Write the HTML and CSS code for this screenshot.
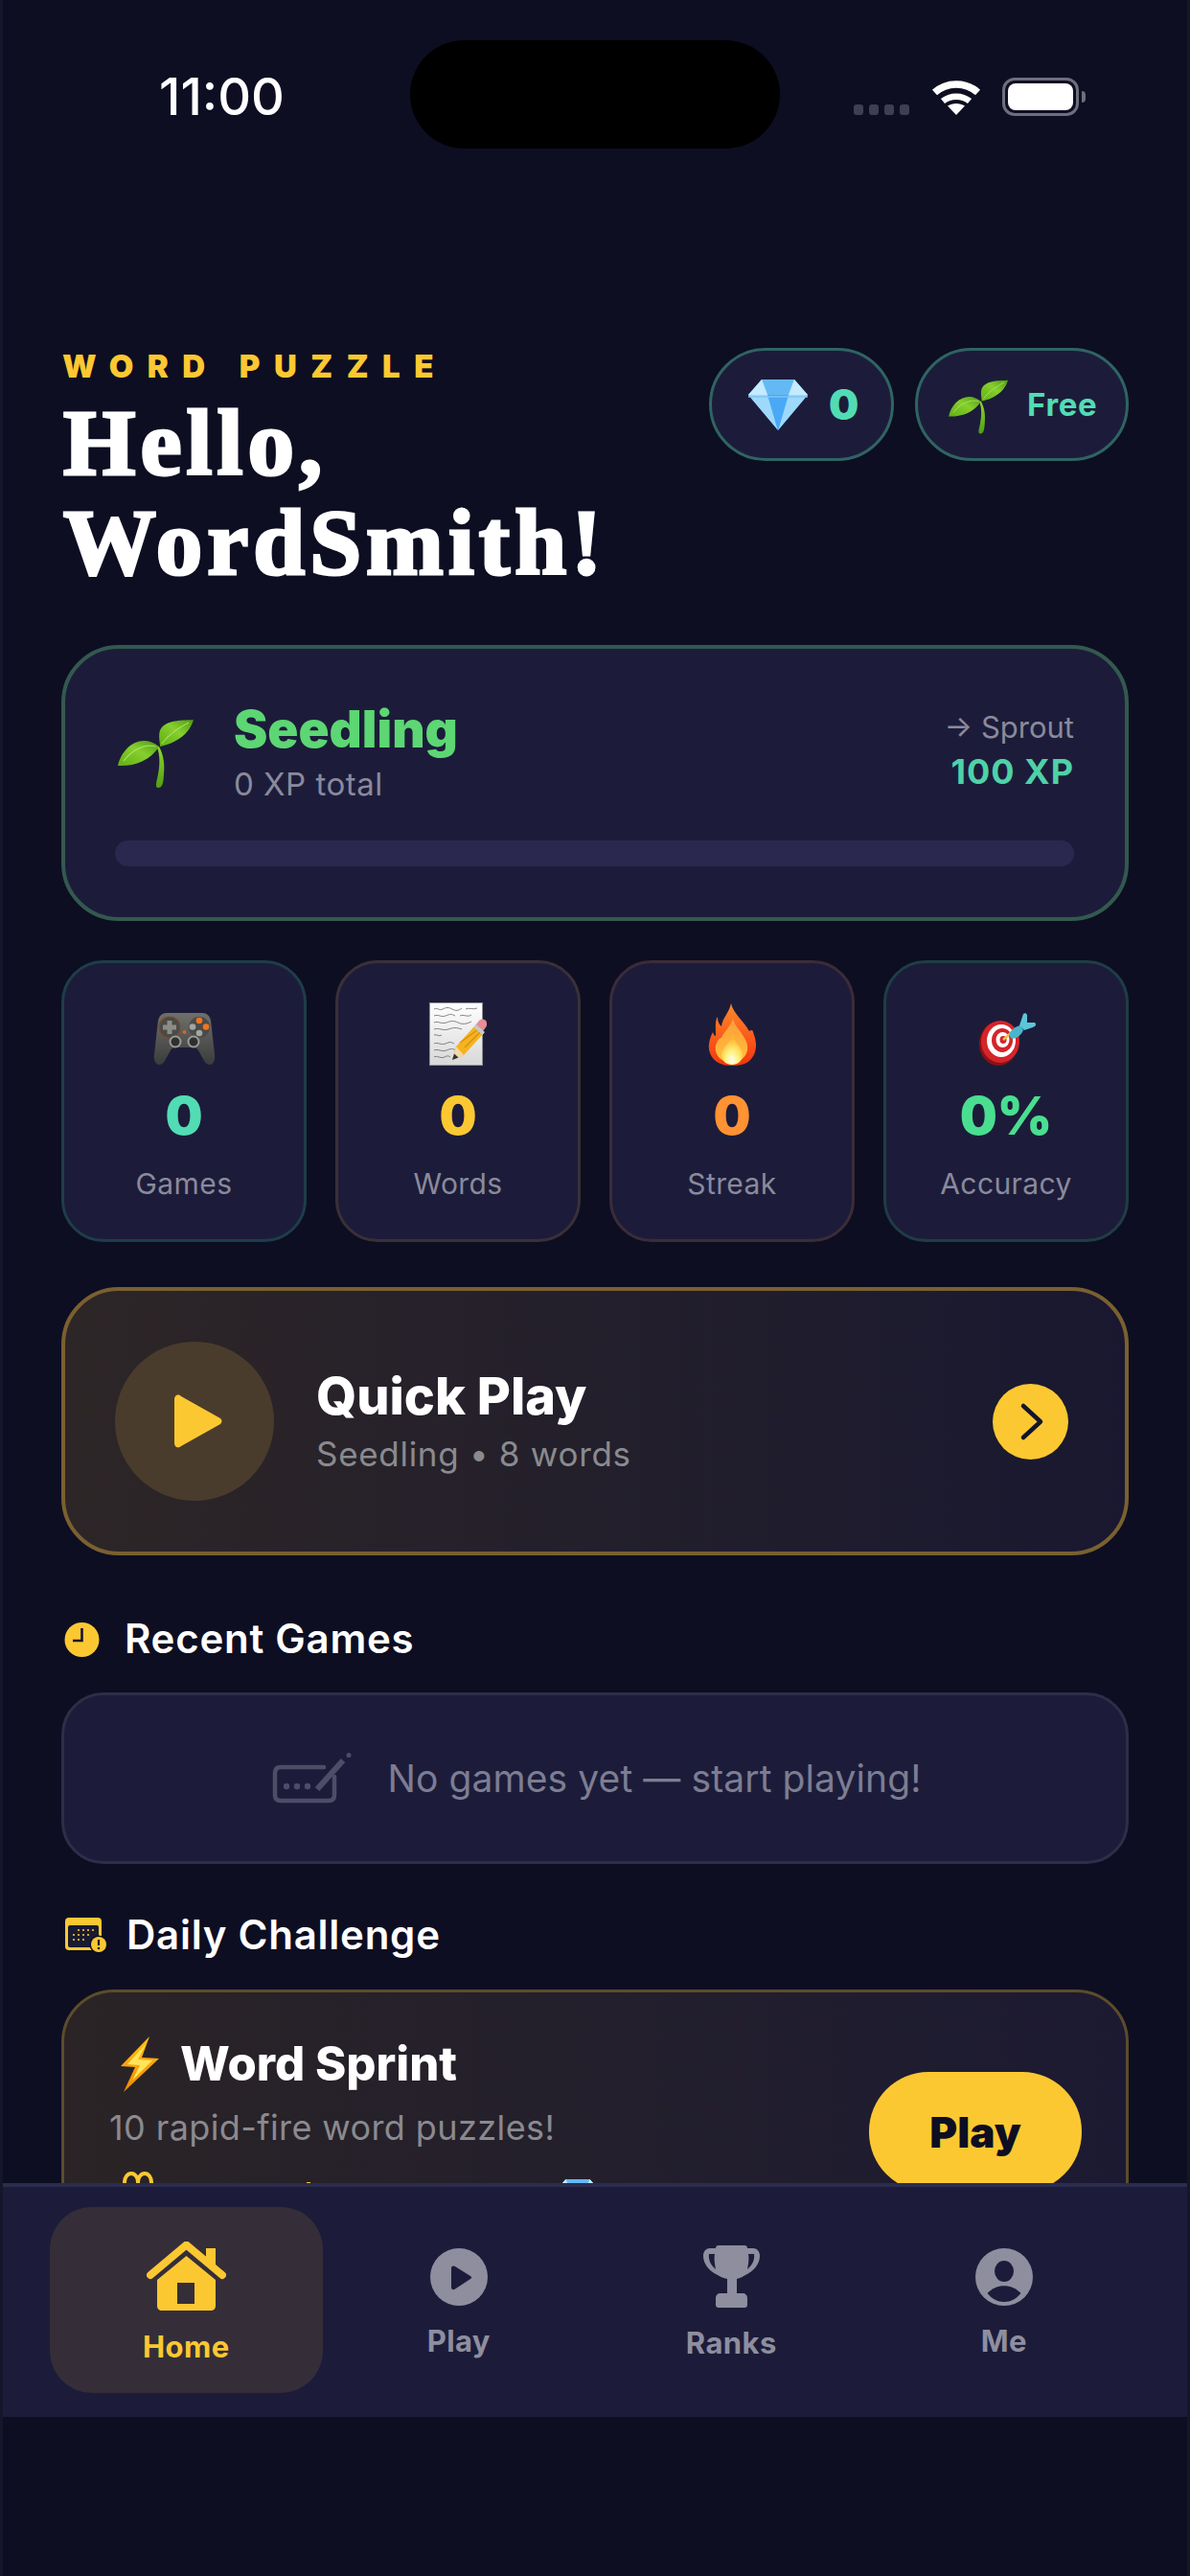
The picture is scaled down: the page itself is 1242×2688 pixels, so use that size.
FILE: index.html
```html
<!DOCTYPE html>
<html lang="en">
<head>
<meta charset="utf-8">
<title>Word Puzzle</title>
<link rel="stylesheet" href="styles.css">
</head>
<body>
<svg class="defs" width="0" height="0" aria-hidden="true">
  <defs>
    <linearGradient id="leaf" x1="0" y1="1" x2="1" y2="0"><stop offset="0" stop-color="#5fae12"/><stop offset=".55" stop-color="#86cf2e"/><stop offset="1" stop-color="#4f9a14"/></linearGradient>
    <linearGradient id="stem" x1="0" y1="0" x2="0" y2="1"><stop offset="0" stop-color="#8fd62e"/><stop offset="1" stop-color="#4f9f12"/></linearGradient>
    <linearGradient id="gem" x1="0" y1="0" x2="0" y2="1"><stop offset="0" stop-color="#a9e2ff"/><stop offset="1" stop-color="#3f9df0"/></linearGradient>
    <linearGradient id="pad" x1="0" y1="0" x2="0" y2="1"><stop offset="0" stop-color="#6f706b"/><stop offset="1" stop-color="#3b3b3c"/></linearGradient>
    <linearGradient id="paper" x1="0" y1="0" x2="0" y2="1"><stop offset="0" stop-color="#fff"/><stop offset="1" stop-color="#d8d8d8"/></linearGradient>
    <linearGradient id="flame" x1="0" y1="0" x2="0" y2="1"><stop offset="0" stop-color="#ff8a2a"/><stop offset="1" stop-color="#f2350f"/></linearGradient>
    <linearGradient id="flame2" x1="0" y1="0" x2="0" y2="1"><stop offset="0" stop-color="#ff9a3a"/><stop offset="1" stop-color="#ffc23a"/></linearGradient>
    <radialGradient id="flame3" cx=".5" cy=".85" r=".7"><stop offset="0" stop-color="#fffef0"/><stop offset=".45" stop-color="#fff07a"/><stop offset="1" stop-color="#ffb52e"/></radialGradient>
    <linearGradient id="bolt" x1="0" y1="0" x2="0" y2="1"><stop offset="0" stop-color="#ffc21a"/><stop offset="1" stop-color="#f08a00"/></linearGradient>
    <symbol id="sprout" viewBox="0 0 80 74">
      <path d="M0 49C4 30 24 14 43 29C34 44 16 50 0 49Z" fill="url(#leaf)"/>
      <path d="M79 1C70 2 50 0 44 12C42 18 44 24 44 29C58 26 74 18 79 1Z" fill="url(#leaf)"/>
      <path d="M6 44C16 32 28 26 40 29M74 4C62 10 52 18 46 26" stroke="#b5e66a" stroke-width="1.2" fill="none" opacity=".8"/>
      <path d="M43 29C48 38 49 48 48 58C47.500 66 47 72 42 72C38 72 41 64 42 58C44 48 44 38 41 30Z" fill="url(#stem)"/>
    </symbol>
    <symbol id="diamond" viewBox="0 0 62 53">
      <path d="M14 0H48L62 16L31 53L0 16Z" fill="url(#gem)"/>
      <path d="M14 0L20 16H42L48 0Z" fill="#64b9f5"/>
      <path d="M0 16H20L31 53ZM62 16H42L31 53Z" fill="#9ed9fb"/>
      <path d="M20 16H42L31 53Z" fill="#4aa9f7"/>
      <path d="M14 0L0 16H20ZM48 0L62 16H42Z" fill="#c4ebff"/>
      <path d="M0 18H62" stroke="#7fc4f5" stroke-width="1.500"/>
    </symbol>
  </defs>
</svg>
<div class="screen">
  <main class="content">
    <header class="status">
      <span class="time">11:00</span>
      <div class="island"></div>
      <div class="status-icons">
        <div class="signal"><i></i><i></i><i></i><i></i></div>
        <svg class="wifi" viewBox="0 0 52 38"><path d="M3.500 14.500C16 3 36 3 48.500 14.500" fill="none" stroke="#fff" stroke-width="7.500"/><path d="M12 23.500C20 17 32 17 40 23.500" fill="none" stroke="#fff" stroke-width="6.500"/><path d="M26 38L17 28.500C22 25 30 25 35 28.500Z" fill="#fff"/></svg>
        <div class="battery"><div class="battery-fill"></div></div>
      </div>
    </header>

    <section class="hero">
      <div class="hero-text">
        <div class="eyebrow">WORD PUZZLE</div>
        <h1 class="greeting">Hello,<br>WordSmith!</h1>
      </div>
      <div class="pills">
        <div class="pill pill-gems"><svg class="pill-gem"><use href="#diamond"/></svg><span class="pill-count">0</span></div>
        <div class="pill pill-plan"><svg class="pill-sprout"><use href="#sprout"/></svg><span class="pill-label">Free</span></div>
      </div>
    </section>

    <section class="xp-card">
      <div class="xp-row">
        <svg class="xp-sprout"><use href="#sprout"/></svg>
        <div class="xp-text">
          <div class="xp-level">Seedling</div>
          <div class="xp-total">0 XP total</div>
        </div>
        <div class="xp-next">
          <div class="xp-next-name">→ Sprout</div>
          <div class="xp-next-value">100 XP</div>
        </div>
      </div>
      <div class="xp-bar"></div>
    </section>

    <section class="stats">
      <div class="stat stat-teal">
        <div class="stat-icon"><svg class="ic-pad" viewBox="0 0 65 57">
          <path d="M14 2H51C56 2 59 5 60 10L64 45C65 52 62 56 59 56C56 56 54 54 52 50L47 41C46 39 44 38 42 38H23C21 38 19 39 18 41L13 50C11 54 9 56 6 56C3 56 0 52 1 45L5 10C6 5 9 2 14 2Z" fill="url(#pad)"/>
          <circle cx="17" cy="17" r="11" fill="#4a4a48" stroke="#7a4a2a" stroke-width="1.200"/>
          <path d="M14.500 10H19.500V14.500H24V19.500H19.500V24H14.500V19.500H10V14.500H14.500Z" fill="#8d8d88"/>
          <circle cx="48" cy="17" r="11" fill="#4a4a48"/>
          <circle cx="48" cy="10" r="3.300" fill="#f0741e"/><circle cx="55" cy="16.500" r="3.300" fill="#f0741e"/><circle cx="41" cy="16.500" r="3.300" fill="#a5a5a0"/><circle cx="48" cy="23" r="3.300" fill="#a5a5a0"/>
          <circle cx="32.500" cy="22" r="2" fill="#d8651e"/>
          <circle cx="23" cy="32" r="5.500" fill="#2f2f2f" stroke="#9a9a96" stroke-width="2"/><circle cx="42" cy="32" r="5.500" fill="#2f2f2f" stroke="#9a9a96" stroke-width="2"/>
        </svg></div>
        <div class="stat-value v-teal">0</div>
        <div class="stat-label">Games</div>
      </div>
      <div class="stat stat-yellow">
        <div class="stat-icon"><svg class="ic-memo" viewBox="0 0 60 66">
          <rect x=".5" y=".5" width="55" height="65" fill="url(#paper)" stroke="#8f8f98"/>
          <path d="M5 7C9 5 10 9 14 7S20 5 24 7S30 9 34 6M38 7C42 5 45 8 50 6M5 14C10 12 12 16 17 14S23 12 27 14M32 14C36 12 40 16 44 13M5 21C9 19 13 23 18 21S26 19 30 21S38 23 44 20M5 28C10 26 14 30 20 28S28 26 34 28M5 34C8 33 10 36 13 34M5 43C9 41 12 45 17 43S22 41 26 43M5 50C9 48 13 52 18 50S24 48 28 50M5 57C8 55 12 59 16 57S20 56 22 57" fill="none" stroke="#555" stroke-width=".7"/>
          <path d="M28 46L48 24L57 32L36 55L24 60Z" fill="#f5b321"/>
          <path d="M32 42L52 27.500M37 47L54 30" stroke="#c98510" stroke-width="1.500" fill="none" opacity=".7"/>
          <path d="M24 60L28 46L36 55Z" fill="#f3d9a8"/><path d="M24 60L26 53.500L30.500 57.500Z" fill="#333"/>
          <path d="M48 24L52 19C54 17 57 17 59 19C60.500 21 60.500 24 59 26L56 30Z" fill="#e78d96"/>
          <path d="M46.500 26L49 23L58 31L55.500 34Z" fill="#c8c8c8"/>
        </svg></div>
        <div class="stat-value v-yellow">0</div>
        <div class="stat-label">Words</div>
      </div>
      <div class="stat stat-orange">
        <div class="stat-icon"><svg class="ic-fire" viewBox="0 0 51 65">
          <path d="M24 0C26 10 37 18 43 29C47 26 47 30 48 33C52 44 50 55 42 61C37 64 31 65 25 65C15 65 6 62 2 52C-1 44 2 36 5 30C6 33 7 34 8 34C8 26 7 18 10 14C10 20 12 22 14 24C15 15 22 10 24 0Z" fill="url(#flame)"/>
          <path d="M26 15C27 24 36 30 40 40C44 50 38 60 26 62C14 62 6 54 8 44C10 38 12 36 14 36C16 30 24 24 26 15Z" fill="url(#flame2)"/>
          <path d="M26 32C27 40 36 46 36 54C36 60 31 64 25 64C19 64 14 60 14 54C14 46 23 42 26 32Z" fill="url(#flame3)"/>
        </svg></div>
        <div class="stat-value v-orange">0</div>
        <div class="stat-label">Streak</div>
      </div>
      <div class="stat stat-green">
        <div class="stat-icon"><svg class="ic-dart" viewBox="0 0 64 56">
          <ellipse cx="24" cy="33" rx="20" ry="23" fill="#8c1111"/>
          <ellipse cx="26" cy="31" rx="20" ry="22" fill="#d5242a"/>
          <ellipse cx="27" cy="30" rx="15" ry="17" fill="#fff"/>
          <ellipse cx="28" cy="29.500" rx="11" ry="12.500" fill="#d5242a"/>
          <ellipse cx="28.500" cy="29" rx="7" ry="8" fill="#fff"/>
          <ellipse cx="29" cy="29" rx="3.500" ry="4" fill="#d5242a"/>
          <path d="M29 29L38 21" stroke="#e9c341" stroke-width="2.500"/>
          <path d="M35 24C37 18 42 15 47 14L50 19C48 24 43 28 38 28Z" fill="#4ab5cb"/>
          <path d="M46 14L50 2C52 0 55 2 54 6L54 11L62 11C64 13 63 15 60 16L51 19Z" fill="#5cc5d8"/>
        </svg></div>
        <div class="stat-value v-green">0%</div>
        <div class="stat-label">Accuracy</div>
      </div>
    </section>

    <section class="quick">
      <div class="quick-circle"><svg class="quick-play" viewBox="0 0 50 56"><path d="M0 5C0 1 4-1 7 2L48 25C50 27 50 29 48 31L7 54C4 57 0 55 0 51Z" fill="#fcc832"/></svg></div>
      <div class="quick-text">
        <div class="quick-title">Quick Play</div>
        <div class="quick-sub">Seedling • 8 words</div>
      </div>
      <div class="quick-go"><svg class="chevron" viewBox="0 0 26 41"><path d="M4 4L22 20.500L4 37" fill="none" stroke="#14142a" stroke-width="4.500" stroke-linecap="round" stroke-linejoin="round"/></svg></div>
    </section>

    <div class="section-head head-recent">
      <svg class="ic-clock" viewBox="0 0 37 36"><circle cx="18.500" cy="18" r="18" fill="#fcc832"/><path d="M18.500 6V19H9" fill="none" stroke="#14142a" stroke-width="2.600"/></svg>
      <h2 class="section-title">Recent Games</h2>
    </div>
    <section class="empty">
      <svg class="ic-empty" viewBox="0 0 83 53"><path d="M54 15H9C5 15 3 17 3 21V44C3 48 5 50 9 50H59C63 50 65 48 65 44V25" fill="none" stroke="#4d4d68" stroke-width="4.500" stroke-linecap="round"/><circle cx="15" cy="35" r="3.200" fill="#4d4d68"/><circle cx="26" cy="35" r="3.200" fill="#4d4d68"/><circle cx="37" cy="35" r="3.200" fill="#4d4d68"/><path d="M47 38L74 8" stroke="#4d4d68" stroke-width="6"/><circle cx="80" cy="2.500" r="2.500" fill="#4d4d68"/></svg>
      <p class="empty-text">No games yet — start playing!</p>
    </section>

    <div class="section-head head-daily">
      <svg class="ic-cal" viewBox="0 0 44 37"><rect width="38" height="34" rx="4" fill="#fcc832"/><rect x="3" y="8" width="32" height="23" rx="2" fill="#1a1a30"/><g fill="#fcc832"><circle cx="14" cy="13" r="1.100"/><circle cx="19" cy="13" r="1.100"/><circle cx="24" cy="13" r="1.100"/><circle cx="29" cy="13" r="1.100"/><circle cx="9" cy="18" r="1.100"/><circle cx="14" cy="18" r="1.100"/><circle cx="19" cy="18" r="1.100"/><circle cx="24" cy="18" r="1.100"/><circle cx="9" cy="23" r="1.100"/><circle cx="14" cy="23" r="1.100"/><circle cx="19" cy="23" r="1.100"/></g><circle cx="35" cy="28" r="9.500" fill="#0d0e22"/><circle cx="35" cy="28" r="8" fill="#fcc832"/><path d="M35 23V29" stroke="#1a1a30" stroke-width="2.200"/><circle cx="35" cy="32" r="1.300" fill="#1a1a30"/></svg>
      <h2 class="section-title">Daily Challenge</h2>
    </div>
    <section class="challenge">
      <div class="challenge-main">
        <div class="challenge-head">
          <svg class="ic-bolt" viewBox="0 0 40 58"><path d="M30 0L0 31L15 32L3 58L40 23L22 22Z" fill="url(#bolt)"/><path d="M26 8L7 29L20 30L12 46L33 25L18 24Z" fill="#ffe45a"/></svg>
          <h3 class="challenge-title">Word Sprint</h3>
        </div>
        <p class="challenge-desc">10 rapid-fire word puzzles!</p>
        <div class="rewards">
          <svg class="ic-ribbon" viewBox="0 0 34 34"><ellipse cx="10" cy="11" rx="7" ry="9" fill="none" stroke="#fcc832" stroke-width="4"/><ellipse cx="24" cy="11" rx="7" ry="9" fill="none" stroke="#fcc832" stroke-width="4"/><circle cx="17" cy="28" r="6" fill="#fcc832"/></svg>
          <span class="reward-tick"></span>
          <svg class="reward-gem"><use href="#diamond"/></svg>
        </div>
      </div>
      <button class="challenge-play">Play</button>
    </section>
  </main>

  <nav class="tabbar">
    <a class="tab tab-active">
      <svg class="ic-home" viewBox="0 0 83 73"><path d="M4 35L41.500 3.500L79 35" fill="none" stroke="#fcc832" stroke-width="8" stroke-linecap="round" stroke-linejoin="round"/><path d="M62 7H72V26L62 17Z" fill="#fcc832"/><path fill-rule="evenodd" d="M41.500 15L72 40V67C72 70 70 72 67 72H16C13 72 11 70 11 67V40ZM32 43V65H50V43Z" fill="#fcc832"/></svg>
      <span class="tab-label">Home</span>
    </a>
    <a class="tab">
      <svg class="ic-tab" viewBox="0 0 60 60"><circle cx="30" cy="30" r="30" fill="#8e8e9f"/><path d="M22 21C22 18.500 24 18 26 19L42 29C43.500 30 43.500 31 42 32L26 42.500C24 44 22 43 22 40.500Z" fill="#1c1c3a"/></svg>
      <span class="tab-label">Play</span>
    </a>
    <a class="tab">
      <svg class="ic-trophy" viewBox="0 0 59 65"><path fill-rule="evenodd" d="M16 0H43C45 0 46 1 46 3H52C56 3 59 6 59 11C59 19 53 27 44 31C41 33 38 34 35 35V50H41C44 50 46 52 46 55V62C46 64 45 65 43 65H16C14 65 13 64 13 62V55C13 52 15 50 18 50H25V35C21 34 18 33 15 31C6 27 0 19 0 11C0 6 3 3 7 3H13C13 1 14 0 16 0ZM6 9C5 15 8 21 13 25C12 20 11 14 12 9ZM47 9C48 14 47 20 46 25C51 21 54 15 53 9Z" fill="#8e8e9f"/></svg>
      <span class="tab-label">Ranks</span>
    </a>
    <a class="tab">
      <svg class="ic-tab" viewBox="0 0 60 60"><circle cx="30" cy="30" r="30" fill="#8e8e9f"/><ellipse cx="30" cy="24" rx="10" ry="11" fill="#1c1c3a"/><path d="M12.500 47C22 36.500 38 36.500 47.500 47C38 59 22 59 12.500 47Z" fill="#1c1c3a"/></svg>
      <span class="tab-label">Me</span>
    </a>
  </nav>
  <div class="bottom-space"></div>
</div>
</body>
</html>
```
FILE: styles.css
```css
* { box-sizing: border-box; }
html, body { margin: 0; padding: 0; }
body { background: #0d0e22; font-family: Inter, "Liberation Sans", sans-serif; color: #fff; }
h1, h2, h3, p { margin: 0; }
.defs { position: absolute; }
svg { display: block; flex: none; }

.screen { width: 1242px; height: 2688px; display: flex; flex-direction: column; background: #0d0e22; border-left: 3px solid #15162c; border-right: 3px solid #15162c; }
.content { height: 2278px; flex: none; overflow: hidden; padding: 0 61px; }

.status { display: grid; grid-template-columns: 1fr 386px 1fr; align-items: center; height: 113px; margin: 42px -61px 0; }
.time { padding-left: 163px; font-size: 54px; font-weight: 500; line-height: 60px; margin-top: 4px; }
.island { height: 113px; border-radius: 57px; background: #000; }
.status-icons { display: flex; align-items: flex-start; justify-content: flex-end; padding-right: 108px; height: 40px; margin-top: 4px; }
.signal { display: flex; gap: 6px; margin: 28px 23px 0 0; }
.signal i { width: 10px; height: 11px; border-radius: 3px; background: #3f3f52; }
.wifi { width: 52px; height: 38px; margin: 1px 22px 0 0; }
.battery { position: relative; width: 80px; height: 40px; border: 3.500px solid #6e6e7e; border-radius: 13px; padding: 3px; margin-right: 5px; }
.battery::after { content: ""; position: absolute; right: -10px; top: 11px; width: 4px; height: 12px; border-radius: 0 4px 4px 0; background: #6e6e7e; }
.battery-fill { height: 100%; background: #fff; border-radius: 8px; }

.hero { display: flex; justify-content: space-between; margin-top: 208px; }
.eyebrow { font-size: 33px; font-weight: 900; letter-spacing: 14.5px; line-height: 36px; color: #fcc832; margin-top: 1px; padding-left: 1px; }
.greeting { font-family: "Liberation Serif", serif; font-weight: 700; font-size: 97px; line-height: 104px; letter-spacing: 5px; -webkit-text-stroke: 3px #fff; margin: 11px 0 0 2px; }
.pills { display: flex; gap: 22px; }
.pill { display: flex; align-items: center; height: 118px; border: 3px solid #2f6463; border-radius: 59px; background: #1c1c3a; }
.pill-gems { width: 193px; padding-left: 38px; gap: 22px; }
.pill-plan { width: 223px; padding-left: 32px; gap: 19px; }
.pill-gem { width: 62px; height: 53px; }
.pill-sprout { width: 63px; height: 58px; margin-top: 6px; }
.pill-count { font-size: 44px; font-weight: 900; color: #52dcb4; }
.pill-label { font-size: 33px; font-weight: 700; letter-spacing: .7px; color: #52dcb4; }

.xp-card { margin-top: 54px; height: 288px; border: 4px solid #33594f; border-radius: 60px; background: #1c1c3a; padding: 54px 53px 0 52px; }
.xp-row { display: flex; align-items: center; height: 109px; }
.xp-sprout { width: 80px; height: 74px; margin: 3px 41px 0 3px; }
.xp-text { flex: 1; }
.xp-level { font-size: 53px; font-weight: 900; line-height: 60px; color: #5dd674; }
.xp-total { font-size: 33px; line-height: 44px; margin-top: 5px; color: #8a8a9c; letter-spacing: .5px; }
.xp-next { text-align: right; margin-top: -7px; }
.xp-next-name { font-size: 31px; line-height: 44px; color: #8a8a9c; }
.xp-next-value { font-size: 36px; font-weight: 700; line-height: 44px; color: #4fd1a8; letter-spacing: 1px; margin-top: 2px; }
.xp-bar { height: 27px; margin-top: 37px; border-radius: 14px; background: #2a284e; }

.stats { display: grid; grid-template-columns: repeat(4, 256px); gap: 30px; margin-top: 41px; }
.stat { display: flex; flex-direction: column; align-items: center; height: 294px; border: 3px solid; border-radius: 44px; background: #1c1c3a; padding-top: 41px; }
.stat-teal { border-color: #1f3d4a; }
.stat-yellow { border-color: #3a3038; }
.stat-orange { border-color: #3c2c38; }
.stat-green { border-color: #1f3d45; }
.stat-icon { height: 66px; display: flex; align-items: flex-end; }
.ic-pad { width: 65px; height: 57px; }
.ic-memo { width: 60px; height: 66px; }
.ic-fire { width: 51px; height: 65px; }
.ic-dart { width: 64px; height: 56px; }
.stat-value { font-size: 55px; font-weight: 900; line-height: 60px; margin-top: 22px; }
.v-teal { color: #52dcb4; }
.v-yellow { color: #fcc832; }
.v-orange { color: #ff9232; }
.v-green { color: #4ade90; }
.stat-label { font-size: 30px; letter-spacing: .4px; line-height: 40px; margin-top: 21px; color: #8a8a9c; }

.quick { display: flex; align-items: center; height: 280px; margin-top: 47px; border: 4px solid #7a6030; border-radius: 60px; background: linear-gradient(90deg, #2d2627, #191830); padding: 0 59px 0 52px; }
.quick-circle { width: 166px; height: 166px; border-radius: 50%; background: #4a3c2c; display: flex; align-items: center; justify-content: center; }
.quick-play { width: 50px; height: 56px; margin-left: 8px; }
.quick-text { flex: 1; margin-left: 44px; }
.quick-title { font-size: 54px; font-weight: 800; line-height: 60px; }
.quick-sub { font-size: 35px; line-height: 44px; margin-top: 8px; color: #8a8a8f; letter-spacing: .7px; }
.quick-go { width: 79px; height: 79px; border-radius: 50%; background: #fcc832; display: flex; align-items: center; justify-content: center; }
.chevron { width: 26px; height: 41px; margin-left: 3px; }

.section-head { display: flex; align-items: center; height: 37px; }
.head-recent { margin-top: 69px; padding-left: 3px; gap: 26px; }
.head-daily { margin-top: 56px; padding-left: 4px; gap: 20px; }
.section-title { font-size: 42px; font-weight: 600; letter-spacing: .75px; line-height: 37px; margin-top: -2px; }
.ic-clock { width: 37px; height: 36px; }
.ic-cal { width: 44px; height: 37px; }

.empty { display: flex; align-items: center; justify-content: center; gap: 37px; height: 179px; margin-top: 37px; border: 3px solid #2e2e48; border-radius: 44px; background: #1c1c3a; padding-left: 4px; }
.ic-empty { width: 83px; height: 53px; }
.empty-text { font-size: 39px; letter-spacing: .1px; color: #7d7d92; }

.challenge { display: flex; height: 300px; margin-top: 38px; border: 3px solid #5c4c2c; border-radius: 55px; background: linear-gradient(90deg, #2a2426, #1c1a32); padding: 46px 46px 0 47px; }
.challenge-main { flex: 1; }
.challenge-head { display: flex; align-items: center; gap: 22px; padding-left: 12px; }
.ic-bolt { width: 40px; height: 58px; }
.challenge-title { font-size: 49px; font-weight: 800; margin-top: -2px; }
.challenge-desc { font-size: 36px; letter-spacing: .4px; line-height: 46px; margin-top: 14px; color: #8a8a8f; }
.rewards { display: flex; align-items: flex-start; margin-top: 23px; padding-left: 13px; }
.ic-ribbon { width: 34px; height: 34px; }
.reward-tick { width: 4px; height: 2px; margin: 11px 0 0 159px; background: #fcc832; }
.reward-gem { width: 46px; height: 39px; margin: 8px 0 0 256px; }
.challenge-play { width: 222px; height: 125px; margin-top: 37px; border: 0; border-radius: 62px; background: #fcc832; color: #0d0e22; font-family: Inter, "Liberation Sans", sans-serif; font-size: 44px; font-weight: 900; }

.tabbar { display: flex; align-items: center; height: 244px; flex: none; border-top: 4px solid #2c2c4e; background: #1c1c3a; padding: 0 49px 4px; }
.tab { flex: 1; height: 194px; display: flex; flex-direction: column; align-items: center; justify-content: center; gap: 19px; padding-top: 6px; border-radius: 44px; }
.tab-active { background: #352e38; }
.ic-home { width: 83px; height: 73px; }
.ic-tab { width: 60px; height: 60px; }
.ic-trophy { width: 59px; height: 65px; }
.tab-label { font-size: 31px; font-weight: 700; letter-spacing: .4px; line-height: 36px; color: #8e8e9f; }
.tab-active .tab-label { color: #fcc832; }
.bottom-space { flex: 1; }
```
